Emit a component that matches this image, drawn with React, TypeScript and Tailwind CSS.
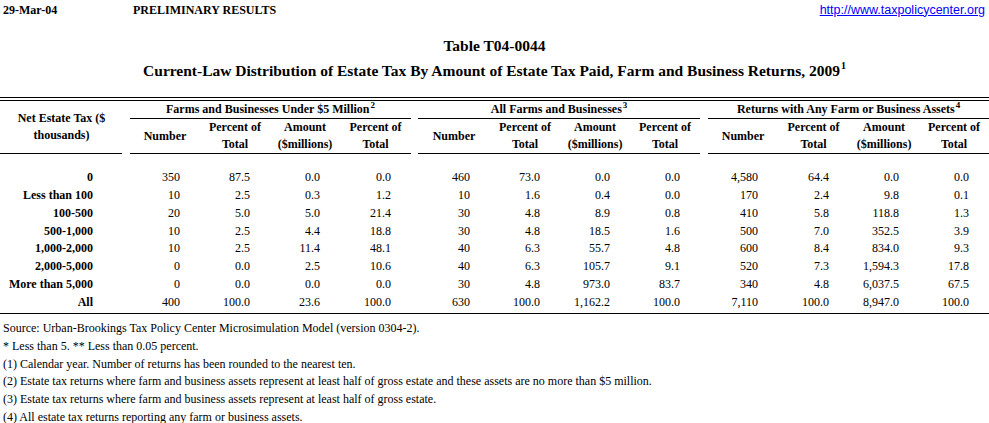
import React from 'react';

const groups = [
  { title: 'Farms and Businesses Under $5 Million', note: '2' },
  { title: 'All Farms and Businesses', note: '3' },
  { title: 'Returns with Any Farm or Business Assets', note: '4' },
];

const rows: string[][] = [
  ['0', '350', '87.5', '0.0', '0.0', '460', '73.0', '0.0', '0.0', '4,580', '64.4', '0.0', '0.0'],
  ['Less than 100', '10', '2.5', '0.3', '1.2', '10', '1.6', '0.4', '0.0', '170', '2.4', '9.8', '0.1'],
  ['100-500', '20', '5.0', '5.0', '21.4', '30', '4.8', '8.9', '0.8', '410', '5.8', '118.8', '1.3'],
  ['500-1,000', '10', '2.5', '4.4', '18.8', '30', '4.8', '18.5', '1.6', '500', '7.0', '352.5', '3.9'],
  ['1,000-2,000', '10', '2.5', '11.4', '48.1', '40', '6.3', '55.7', '4.8', '600', '8.4', '834.0', '9.3'],
  ['2,000-5,000', '0', '0.0', '2.5', '10.6', '40', '6.3', '105.7', '9.1', '520', '7.3', '1,594.3', '17.8'],
  ['More than 5,000', '0', '0.0', '0.0', '0.0', '30', '4.8', '973.0', '83.7', '340', '4.8', '6,037.5', '67.5'],
  ['All', '400', '100.0', '23.6', '100.0', '630', '100.0', '1,162.2', '100.0', '7,110', '100.0', '8,947.0', '100.0'],
];

const footnotes = [
  'Source: Urban-Brookings Tax Policy Center Microsimulation Model (version 0304-2).',
  '* Less than 5. ** Less than 0.05 percent.',
  '(1) Calendar year. Number of returns has been rounded to the nearest ten.',
  '(2) Estate tax returns where farm and business assets represent at least half of gross estate and these assets are no more than $5 million.',
  '(3) Estate tax returns where farm and business assets represent at least half of gross estate.',
  '(4) All estate tax returns reporting any farm or business assets.',
];

function SubHeaders() {
  return (
    <>
      <th className="border-b border-black font-bold align-middle">Number</th>
      <th className="border-b border-black font-bold">
        Percent of
        <br />
        Total
      </th>
      <th className="border-b border-black font-bold">
        Amount
        <br />
        ($millions)
      </th>
      <th className="border-b border-black font-bold">
        Percent of
        <br />
        Total
      </th>
    </>
  );
}

export default function App() {
  return (
    <div className="w-[989px] bg-white text-black font-['Liberation_Serif',serif] text-[12px]">
      <div className="flex h-[20px] items-center font-bold text-[12px]">
        <div className="w-[130px] pl-[3px]">29-Mar-04</div>
        <div className="pl-[3px]">PRELIMINARY RESULTS</div>
        <a
          href="#"
          className="ml-auto pr-[4px] font-['Liberation_Sans',Arial,sans-serif] font-normal text-[12.5px] text-[#0000ff] underline"
        >
          http://www.taxpolicycenter.org
        </a>
      </div>

      <div className="pt-[16px] text-center font-bold text-[15.5px] leading-[20px]">Table T04-0044</div>
      <div className="pt-[5px] text-center font-bold text-[15.5px] leading-[20px]">
        Current-Law Distribution of Estate Tax By Amount of Estate Tax Paid, Farm and Business Returns, 2009
        <sup className="text-[10px] align-baseline relative -top-[7px] ml-[1px]">1</sup>
      </div>

      <div className="mt-[16px] h-[4px] border-y border-black" />

      <table className="w-[989px] table-fixed border-separate border-spacing-0">
        <colgroup>
          <col className="w-[122px]" />
          <col className="w-[8px]" />
          <col className="w-[70px]" />
          <col className="w-[70px]" />
          <col className="w-[70px]" />
          <col className="w-[71px]" />
          <col className="w-[7px]" />
          <col className="w-[72px]" />
          <col className="w-[70px]" />
          <col className="w-[70px]" />
          <col className="w-[70px]" />
          <col className="w-[8px]" />
          <col className="w-[70px]" />
          <col className="w-[71px]" />
          <col className="w-[70px]" />
          <col className="w-[70px]" />
        </colgroup>
        <thead className="leading-[17px]">
          <tr className="h-[17px]">
            <th rowSpan={2} className="border-b border-black pl-[1px] font-bold text-center align-middle">
              Net Estate Tax ($
              <br />
              thousands)
            </th>
            {groups.map((g) => (
              <React.Fragment key={g.title}>
                <th />
                <th colSpan={4} className="border-b border-black font-bold whitespace-nowrap">
                  {g.title}
                  <sup className="text-[9px] align-baseline relative -top-[5px] ml-[1px]">{g.note}</sup>
                </th>
              </React.Fragment>
            ))}
          </tr>
          <tr className="h-[34px]">
            <th />
            <SubHeaders />
            <th />
            <SubHeaders />
            <th />
            <SubHeaders />
          </tr>
        </thead>
        <tbody>
          <tr className="h-[15px]">
            <td colSpan={16} />
          </tr>
          {rows.map((r) => (
            <tr key={r[0]} className="h-[17.75px] leading-[17px]">
              <td className="pr-[29px] text-right font-bold whitespace-nowrap">{r[0]}</td>
              <td />
              {r.slice(1, 5).map((v, i) => (
                <td key={i} className="pr-[20px] text-right">{v}</td>
              ))}
              <td />
              {r.slice(5, 9).map((v, i) => (
                <td key={i} className="pr-[20px] text-right">{v}</td>
              ))}
              <td />
              {r.slice(9, 13).map((v, i) => (
                <td key={i} className="pr-[20px] text-right">{v}</td>
              ))}
            </tr>
          ))}
        </tbody>
      </table>

      <div className="mt-[2px] border-t border-black pt-[6px]">
        {footnotes.map((f) => (
          <div key={f} className="pl-[3px] leading-[17.75px] text-[12px] whitespace-nowrap">
            {f}
          </div>
        ))}
      </div>
    </div>
  );
}
